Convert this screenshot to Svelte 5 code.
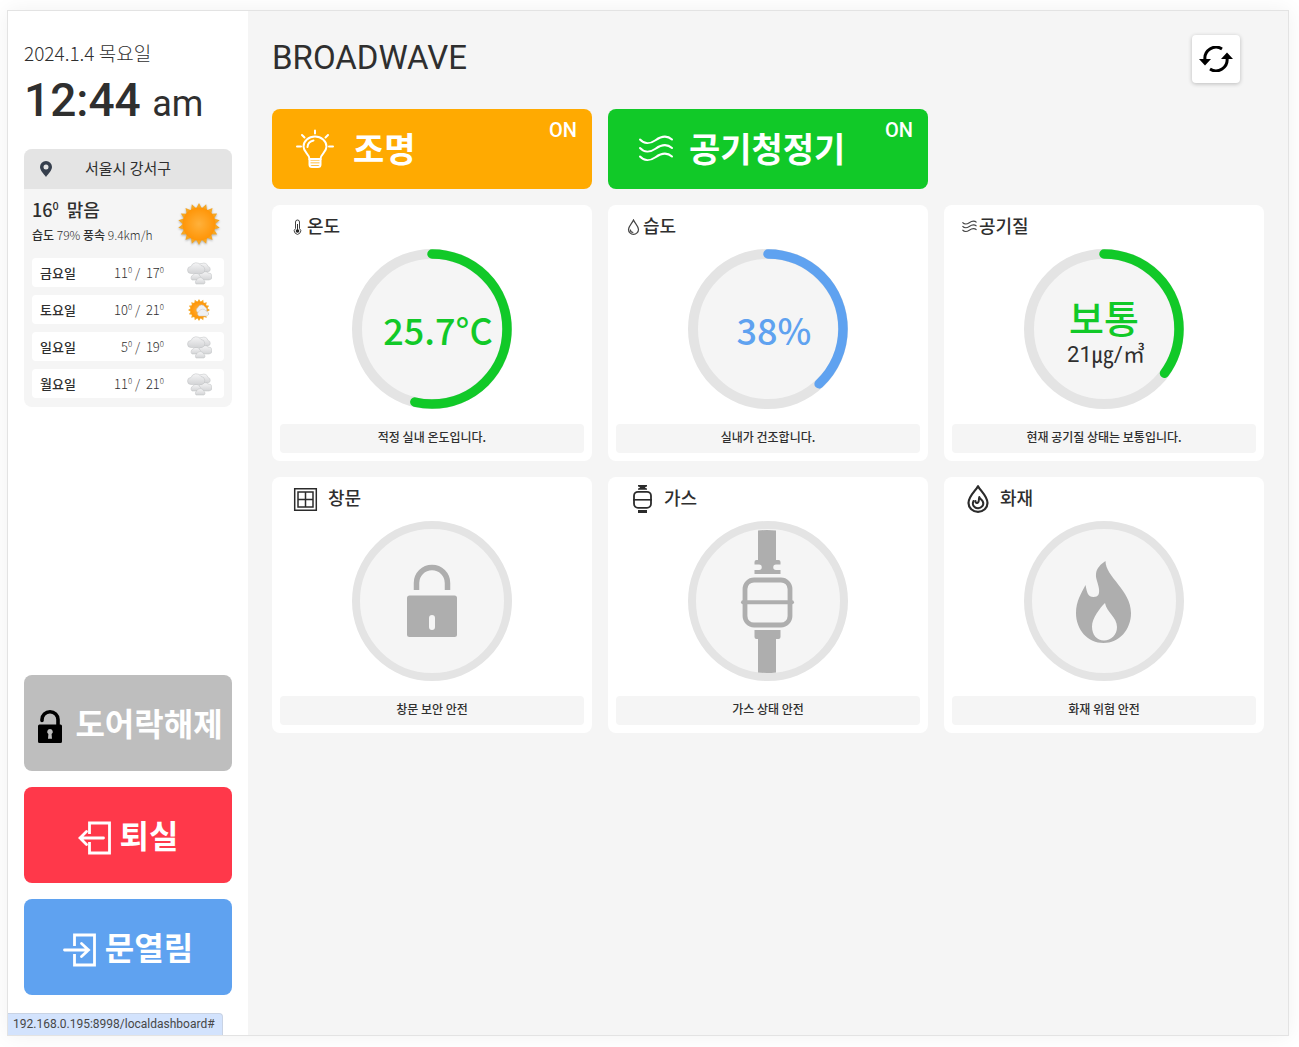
<script>
  let date = $state("2024.1.4 목요일");
  let time = $state("12:44");
  let weather = { temp: 16, sky: "맑음", humidity: "79%", wind: "9.4km/h" };
  let forecast = [
    { day: "금요일", low: 11, high: 17, icon: "cloud" },
    { day: "토요일", low: 10, high: 21, icon: "partly" },
    { day: "일요일", low: 5, high: 19, icon: "cloud" },
    { day: "월요일", low: 11, high: 21, icon: "cloud" },
  ];

  let light = $state(true);
  let purifier = $state(true);

  let gauges = [
    {
      name: "온도",
      icon: "thermo",
      value: "25.7°C",
      percent: 53.6,
      color: "#11c928",
      note: "적정 실내 온도입니다.",
    },
    {
      name: "습도",
      icon: "drop",
      value: "38%",
      percent: 38,
      color: "#5fa2f0",
      note: "실내가 건조합니다.",
    },
    {
      name: "공기질",
      icon: "wind",
      value: "보통",
      sub: "21㎍/㎥",
      percent: 35,
      color: "#11c928",
      note: "현재 공기질 상태는 보통입니다.",
    },
  ];
  let sensors = [
    { name: "창문", icon: "window", note: "창문 보안 안전" },
    { name: "가스", icon: "gas", note: "가스 상태 안전" },
    { name: "화재", icon: "fire", note: "화재 위험 안전" },
  ];

  const length = 2 * Math.PI * 75;

  function burst(points, outer, inner) {
    let list = [];
    for (let i = 0; i < points * 2; i++) {
      const r = i % 2 ? inner : outer;
      const a = (Math.PI * i) / points - Math.PI / 2;
      list.push(`${(r * Math.cos(a)).toFixed(2)},${(r * Math.sin(a)).toFixed(2)}`);
    }
    return list.join(" ");
  }
</script>

{#snippet waves()}
  <path d="M1 4.500C5 9 11 9 16.500 5.200S28 0 33 4.500" />
  <path d="M1 13C5 17.500 11 17.500 16.500 13.700S28 8.500 33 13" />
  <path d="M1 21.500C5 26 11 26 16.500 22.200S28 17 33 21.500" />
{/snippet}

{#snippet cloud()}
  <g fill="url(#cloudFill)" stroke="#bfc0c2" stroke-width="0.5">
    <path d="M15 10.500a4 4 0 0 1 1-8a4.200 4.200 0 0 1 6 3a2.800 2.800 0 0 1 0 5.500z" />
    <path d="M16 19a3.500 3.500 0 0 1 0-7a4 4 0 0 1 6 0a3.500 3.500 0 0 1 1 7z" />
    <path d="M6 19a3 3 0 0 1 1-5a4 4 0 0 1 7 1a2.500 2.500 0 0 1 0 4z" />
    <path d="M10 23a3 3 0 0 1 1-4.500a3.800 3.800 0 0 1 7 1a2 2 0 0 1 0 3.500z" />
    <path d="M5 12.500a3.500 3.500 0 0 1 0-7a5.500 5.500 0 0 1 10-1a4.100 4.100 0 0 1 1 8z" />
  </g>
{/snippet}

<svg class="defs" width="0" height="0" aria-hidden="true">
  <defs>
    <radialGradient id="sunFill">
      <stop offset="0" stop-color="#ffb13b" />
      <stop offset="1" stop-color="#ff9507" />
    </radialGradient>
    <linearGradient id="cloudFill" x1="0" y1="0" x2="0" y2="1">
      <stop offset="0" stop-color="#f5f5f6" />
      <stop offset="1" stop-color="#d3d4d6" />
    </linearGradient>
  </defs>
</svg>

<div class="frame">
  <aside class="side">
    <p class="date">{date}</p>
    <p class="time">{time} <span>am</span></p>

    <section class="weather">
      <div class="place">
        <svg width="12" height="16" viewBox="0 0 12 16" aria-hidden="true">
          <path
            fill="#363f4d"
            fill-rule="evenodd"
            d="M6 0a6 6 0 0 1 6 6c0 3.500-4 7-6 10C4 13 0 9.500 0 6a6 6 0 0 1 6-6zm0 3.500a2.500 2.500 0 1 0 0 5a2.500 2.500 0 0 0 0-5z"
          />
        </svg>
        <span>서울시 강서구</span>
      </div>
      <div class="now">
        <div class="text">
          <p class="sky">{weather.temp}<sup>0</sup>&nbsp; {weather.sky}</p>
          <p class="detail">
            <b>습도</b> {weather.humidity} <b>풍속</b> {weather.wind}
          </p>
        </div>
        <svg class="sun" width="44" height="44" viewBox="-22 -22 44 44" aria-hidden="true">
          <polygon points={burst(18, 21, 16)} fill="#f5a623" />
          <circle r="16.500" fill="url(#sunFill)" />
        </svg>
      </div>
      <ul class="days">
        {#each forecast as f}
          <li>
            <b>{f.day}</b>
            <span class="range">{f.low}<sup>0</sup>&nbsp;/&nbsp; {f.high}<sup>0</sup></span>
            <svg width="26" height="24" viewBox="0 0 26 24" aria-hidden="true">
              {#if f.icon === "partly"}
                <g transform="translate(13 12)">
                  <polygon points={burst(16, 11, 8.5)} fill="#f5a623" />
                  <circle r="8.500" fill="url(#sunFill)" />
                </g>
                <g fill="#f0f0f1" stroke="#c3c4c6" stroke-width="0.5">
                  <path d="M12 14.500a2.800 2.800 0 0 1 0-5a3.800 3.800 0 0 1 7-.5a3 3 0 0 1 0 5.500z" />
                  <path d="M13 18a2.500 2.500 0 0 1 0-4.500a4 4 0 0 1 7-.5a2.600 2.600 0 0 1 1 5z" />
                </g>
              {:else}
                {@render cloud()}
              {/if}
            </svg>
          </li>
        {/each}
      </ul>
    </section>

    <div class="actions">
      <button class="action lock">
        <svg width="24" height="33" viewBox="0 0 24 33" aria-hidden="true">
          <path
            d="M4 10.500V9.500A8 7.700 0 0 1 20 9.500V16"
            fill="none"
            stroke="#000"
            stroke-width="3.600"
            stroke-linecap="round"
          />
          <path
            fill="#000"
            fill-rule="evenodd"
            d="M1.500 14.500H22.500a1.500 1.500 0 0 1 1.500 1.500V31.500a1.500 1.500 0 0 1-1.500 1.500H1.500a1.500 1.500 0 0 1-1.500-1.500V16a1.500 1.500 0 0 1 1.500-1.500zM12 19a2.800 2.800 0 0 0-1.600 5.100L10 28.800H14L13.600 24.100A2.800 2.800 0 0 0 12 19z"
          />
        </svg>
        <span>도어락해제</span>
      </button>
      <button class="action leave">
        <svg width="34" height="34" viewBox="0 0 34 34" aria-hidden="true">
          <g fill="none" stroke="#fff" stroke-width="2.800">
            <path d="M11.500 13V2H31.500V32H11.500V21" />
            <path d="M25.500 17H2M8.500 10.500L2 17L8.500 23.500" stroke-linecap="round" />
          </g>
        </svg>
        <span>퇴실</span>
      </button>
      <button class="action open">
        <svg width="34" height="34" viewBox="0 0 34 34" aria-hidden="true">
          <g fill="none" stroke="#fff" stroke-width="2.800">
            <path d="M11.500 13V2H31.500V32H11.500V21" />
            <path d="M1.500 17H25.500M18.500 10.500L25.500 17L18.500 23.500" stroke-linecap="round" />
          </g>
        </svg>
        <span>문열림</span>
      </button>
    </div>
  </aside>

  <main class="main">
    <header class="header">
      <h1>BROADWAVE</h1>
      <button class="reload" aria-label="새로고침">
        <svg width="34" height="26" viewBox="0 0 34 26" aria-hidden="true">
          <g fill="none" stroke="#000" stroke-width="3">
            <path d="M6 14A11.200 11.200 0 0 1 23 2.900" />
            <path d="M28 12A11.200 11.200 0 0 1 11 23.100" />
          </g>
          <path d="M0 13H12L6 19.500zM22 13H34L28 6.500z" />
        </svg>
      </button>
    </header>

    <div class="grid">
      <button class="tile light" onclick={() => (light = !light)}>
        <svg width="48" height="40" viewBox="0 0 48 40" aria-hidden="true">
          <g fill="none" stroke="#fff" stroke-width="2" stroke-linecap="round">
            <path d="M13.500 30C13.500 25 7.500 23.500 7.500 17.500A11.500 10 0 0 1 30.500 17.500C30.500 23.500 24.500 25 24.500 30z" />
            <path d="M13.500 30V35.500Q13.500 38 16 38H22Q24.500 38 24.500 35.500V30M14 32.500H24M14 35.200H24" />
            <path d="M11.500 18Q12 12.500 17.500 11.500" />
            <path d="M19 1.500V4.500M6 6L8.500 8.500M32 6L29.500 8.500M1 17.500H5M33 17.500H37" />
          </g>
        </svg>
        <span>조명</span>
        <em>{light ? "ON" : "OFF"}</em>
      </button>
      <button class="tile purifier" onclick={() => (purifier = !purifier)}>
        <svg width="48" height="40" viewBox="-7 -6 48 40" aria-hidden="true">
          <g fill="none" stroke="#fff" stroke-width="2" stroke-linecap="round">
            {@render waves()}
          </g>
        </svg>
        <span>공기청정기</span>
        <em>{purifier ? "ON" : "OFF"}</em>
      </button>
      <div></div>

      {#each gauges as g}
        <section class="card">
          <h2>
            {#if g.icon === "thermo"}
              <svg width="15" height="16" viewBox="0 0 15 16" aria-hidden="true">
                <path
                  d="M5.500 9.500V3a2 2 0 0 1 4 0V9.500a3.200 3.200 0 1 1-4 0z"
                  fill="none"
                  stroke="#444"
                />
                <path d="M7.500 5V12" stroke="#333" />
                <circle cx="7.500" cy="12" r="1.800" fill="#222" />
              </svg>
            {:else if g.icon === "drop"}
              <svg width="15" height="16" viewBox="0 0 15 16" aria-hidden="true">
                <g fill="none" stroke="#444" stroke-width="1.200">
                  <path d="M7.500 1C6 4.500 2.500 7 2.500 10.500a5 4.800 0 0 0 10 0C12.500 7 9 4.500 7.500 1z" />
                  <path d="M4.300 10.500a3 3 0 0 0 3 3" />
                </g>
              </svg>
            {:else}
              <svg width="15" height="16" viewBox="0 -3 34 36" aria-hidden="true">
                <g fill="none" stroke="#444" stroke-width="2.500">
                  {@render waves()}
                </g>
              </svg>
            {/if}
            <span>{g.name}</span>
          </h2>
          <div class="dial">
            <svg width="160" height="160" viewBox="0 0 160 160" aria-hidden="true">
              <circle cx="80" cy="80" r="75" fill="#f5f5f5" stroke="#e4e4e4" stroke-width="10" />
              <circle
                cx="80"
                cy="80"
                r="75"
                fill="none"
                stroke={g.color}
                stroke-width="9.500"
                stroke-linecap="round"
                stroke-dasharray="{(length * g.percent) / 100} {length}"
                transform="rotate(-90 80 80)"
              />
            </svg>
            <div class={`reading ${g.sub ? "double" : ""}`} style:color={g.color}>
              <strong>{g.value}</strong>
              {#if g.sub}<small>{g.sub}</small>{/if}
            </div>
          </div>
          <p class="note">{g.note}</p>
        </section>
      {/each}

      {#each sensors as s}
        <section class="card sensor">
          <h2>
            {#if s.icon === "window"}
              <svg width="28" height="28" viewBox="0 0 28 28" aria-hidden="true">
                <g fill="none" stroke="#2b2b2b" stroke-width="1.500">
                  <path d="M2.700 3.700H24.300V25.300H2.700zM6 7H21V22H6zM13.500 7V22M6 14.500H21" />
                </g>
              </svg>
            {:else if s.icon === "gas"}
              <svg width="28" height="28" viewBox="0 0 28 28" aria-hidden="true">
                <path
                  fill="#2b2b2b"
                  d="M10 0H19V1.500Q17 2 17 2.500T19 3.600V4.800H10V3.600Q12 3 12 2.500T10 1.500zM10 25H19V28H10z"
                />
                <rect x="6" y="6.800" width="17" height="16" rx="4" fill="none" stroke="#2b2b2b" stroke-width="1.800" />
                <path d="M5 14.800H24" stroke="#2b2b2b" stroke-width="1.600" />
              </svg>
            {:else}
              <svg width="28" height="28" viewBox="0 0 28 28" aria-hidden="true">
                <g fill="none" stroke="#2b2b2b" stroke-width="2.200" stroke-linejoin="round">
                  <path d="M14 1.200C11.500 6 4.500 11 4.500 18a9.500 8.800 0 0 0 19 0C23.500 11 16.500 6 14 1.200z" />
                  <path
                    d="M9.500 16C7.500 20 10.500 23.300 14 23.300S20.500 20 18.800 16.500C18 14.800 15.800 14 15.300 12C14.500 14 15.500 16 14 17.500C12 18.500 11.500 17.500 11.500 16"
                    stroke-width="2"
                    stroke-linecap="round"
                  />
                </g>
              </svg>
            {/if}
            <span>{s.name}</span>
          </h2>
          <div class="dial">
            <svg width="160" height="160" viewBox="0 0 160 160" aria-hidden="true">
              <circle cx="80" cy="80" r="76" fill="#f5f5f5" stroke="#e4e4e4" stroke-width="8" />
              {#if s.icon === "window"}
                <path d="M64.500 69V62a15.500 15.500 0 0 1 31 0V69" fill="none" stroke="#aeaeae" stroke-width="5.500" />
                <rect x="55" y="74.500" width="50" height="41.500" rx="2.500" fill="#aeaeae" />
                <rect x="77" y="94" width="6" height="15" rx="3" fill="#f5f5f5" />
              {:else if s.icon === "gas"}
                <g fill="#aeaeae">
                  <path d="M70 9.500Q79 8.500 88 9.500V39H90.500Q92.500 39 92.500 41V43.500H88a2.500 2.500 0 0 0 0 5.500H92.500V53H66.500V49H71a2.500 2.500 0 0 0 0-5.500H66.500V41Q66.500 39 68.500 39H70z" />
                  <path d="M66.500 109H92.500V116Q92.500 118 90.500 118H88V151.500Q79 152.500 70 151.500V118H68.500Q66.500 118 66.500 116z" />
                </g>
                <rect x="57" y="59" width="45" height="45" rx="9" fill="none" stroke="#aeaeae" stroke-width="4.800" />
                <path d="M55 81.300H104" stroke="#aeaeae" stroke-width="4" stroke-linecap="round" />
              {:else}
                <path
                  fill="#aeaeae"
                  fill-rule="evenodd"
                  d="M81.500 40C81.500 56 107 69 107 92C107 109 95 122 79.500 122S52 109 52 92C52 80 57.500 72 61.500 64C63 72 64 76 69.500 76C74.500 76 75.500 73 75 68C74 61 71.500 58 72 53C72.500 47 77 43 81.500 40zM81 82C76 87 68 97 68 105.500C68 114 73 119.500 80 119.500S93 114 93 106C93 96 82.500 91 81 82z"
                />
              {/if}
            </svg>
          </div>
          <p class="note">{s.note}</p>
        </section>
      {/each}
    </div>
  </main>

  <a class="link" href="#top">192.168.0.195:8998/localdashboard#</a>
</div>

<style>
  :global(body) {
    background: #fff;
  }
  .defs {
    position: absolute;
  }
  .frame {
    display: flex;
    position: relative;
    box-sizing: border-box;
    min-height: calc(100vh - 21px);
    margin: 10px 10px 11px 7px;
    border: 1px solid #e3e3e3;
    box-shadow: 0 0 20px rgba(0, 0, 0, 0.06);
    color: #2f2f2f;
    font-family: "Noto Sans CJK KR", "Noto Sans", sans-serif;
  }
  p,
  h1,
  h2,
  ul {
    margin: 0;
    padding: 0;
    font-weight: 400;
  }
  button {
    border: 0;
    font-family: inherit;
    cursor: pointer;
  }
  .side {
    display: flex;
    flex-direction: column;
    flex: 0 0 240px;
    box-sizing: border-box;
    padding: 28px 16px 40px;
    background: #fff;
  }
  .date {
    font-size: 19px;
    font-weight: 300;
    line-height: 28px;
  }
  .time {
    font-family: Roboto, sans-serif;
    font-size: 46px;
    font-weight: 500;
    line-height: 66px;
  }
  .time span {
    font-size: 36px;
    font-weight: 400;
  }
  .weather {
    margin-top: 12px;
    padding-bottom: 9px;
    border-radius: 8px;
    background: #f5f5f5;
    overflow: hidden;
  }
  .place {
    display: grid;
    grid-template-columns: 12px 1fr 12px;
    align-items: center;
    height: 40px;
    padding: 0 16px;
    background: #e4e4e4;
    font-size: 15px;
    line-height: 36px;
    text-align: center;
  }
  .place span {
    padding-bottom: 2px;
  }
  .now {
    display: flex;
    justify-content: space-between;
    align-items: center;
    height: 69px;
    padding: 0 11px 0 8px;
    white-space: nowrap;
  }
  .text {
    padding-bottom: 6px;
  }
  .sky {
    font-size: 18px;
    font-weight: 500;
    line-height: 28px;
  }
  sup {
    font-size: 60%;
    line-height: 0;
  }
  .detail {
    font-size: 12px;
    font-weight: 300;
    line-height: 24px;
  }
  b {
    font-weight: 500;
  }
  .sun {
    filter: drop-shadow(0 1px 1px rgba(0, 0, 0, 0.3));
  }
  .days {
    display: flex;
    flex-direction: column;
    gap: 8px;
    margin: 0 8px;
    list-style: none;
  }
  .days li {
    display: grid;
    grid-template-columns: 44px 1fr 44px;
    align-items: center;
    height: 29px;
    padding: 0 3px 0 8px;
    border-radius: 4px;
    background: #fff;
    font-size: 13px;
    line-height: 28px;
  }
  .range {
    padding-right: 13px;
    font-weight: 300;
    text-align: right;
    white-space: nowrap;
  }
  .days svg {
    justify-self: center;
  }
  .actions {
    display: flex;
    flex-direction: column;
    gap: 16px;
    margin-top: auto;
  }
  .action {
    display: flex;
    align-items: center;
    justify-content: center;
    gap: 8px;
    height: 96px;
    padding: 6px 0 0;
    border-radius: 8px;
    color: #fff;
    font-size: 32px;
    font-weight: 700;
    line-height: 40px;
    white-space: nowrap;
  }
  .action span {
    padding-bottom: 8px;
  }
  .lock {
    gap: 13px;
    padding-left: 5px;
    background: #bebebe;
  }
  .leave {
    background: #ff384a;
  }
  .open {
    background: #5fa2f0;
  }
  .main {
    flex: 1;
    min-width: 0;
    padding: 24px;
    background: #f5f5f5;
  }
  .header {
    display: flex;
    align-items: center;
    justify-content: space-between;
    margin-bottom: 26px;
    padding-right: 24px;
  }
  h1 {
    padding-bottom: 2px;
    font-family: Roboto, sans-serif;
    font-size: 33px;
    line-height: 44px;
  }
  .reload {
    display: flex;
    align-items: center;
    justify-content: center;
    width: 48px;
    height: 48px;
    padding: 0;
    border-radius: 4px;
    background: #fff;
    box-shadow: 0 1px 4px rgba(0, 0, 0, 0.24);
  }
  .grid {
    display: grid;
    grid-template-columns: repeat(3, 1fr);
    gap: 16px;
  }
  .tile {
    display: flex;
    position: relative;
    align-items: center;
    gap: 9px;
    height: 80px;
    padding: 0 24px;
    border-radius: 8px;
    color: #fff;
    font-size: 34px;
    font-weight: 700;
    line-height: 48px;
  }
  .tile span {
    padding-bottom: 2px;
  }
  .tile em {
    position: absolute;
    top: 8px;
    right: 15px;
    font-family: Roboto, sans-serif;
    font-size: 20px;
    font-style: normal;
    font-weight: 500;
    line-height: 26px;
  }
  .light {
    background: #ffaa01;
  }
  .purifier {
    background: #11c928;
  }
  .card {
    display: flex;
    flex-direction: column;
    align-items: center;
    padding: 0 8px 8px;
    border-radius: 8px;
    background: #fff;
  }
  h2 {
    display: flex;
    align-items: center;
    align-self: stretch;
    gap: 2px;
    height: 44px;
    padding-left: 10px;
    font-size: 18px;
    font-weight: 500;
    line-height: 28px;
  }
  h2 span {
    padding-bottom: 4px;
  }
  .sensor h2 {
    gap: 8px;
    padding-left: 12px;
  }
  .dial {
    display: grid;
    place-items: center;
    margin-bottom: 15px;
  }
  .dial > * {
    grid-area: 1 / 1;
  }
  .dial svg {
    display: block;
  }
  .reading {
    display: flex;
    flex-direction: column;
    align-items: center;
    padding-left: 12px;
    font-size: 36px;
    line-height: 44px;
  }
  .reading strong {
    font-weight: 500;
  }
  .double {
    padding: 8px 0 0;
    font-size: 38px;
  }
  .reading small {
    padding-left: 4px;
    color: #2f2f2f;
    font-family: Roboto, "Noto Sans CJK KR", sans-serif;
    font-size: 22px;
    line-height: 32px;
  }
  .note {
    align-self: stretch;
    height: 29px;
    border-radius: 4px;
    background: #f5f5f5;
    font-size: 12px;
    font-weight: 500;
    line-height: 26px;
    text-align: center;
  }
  .link {
    position: absolute;
    left: 0;
    bottom: 0;
    padding: 0 7px 0 5px;
    border-top: 1px solid #c9d3e4;
    border-right: 1px solid #c9d3e4;
    border-top-right-radius: 4px;
    background: #d3e3fd;
    color: #474747;
    font-family: Roboto, sans-serif;
    font-size: 12px;
    line-height: 21px;
    text-decoration: none;
  }
</style>
